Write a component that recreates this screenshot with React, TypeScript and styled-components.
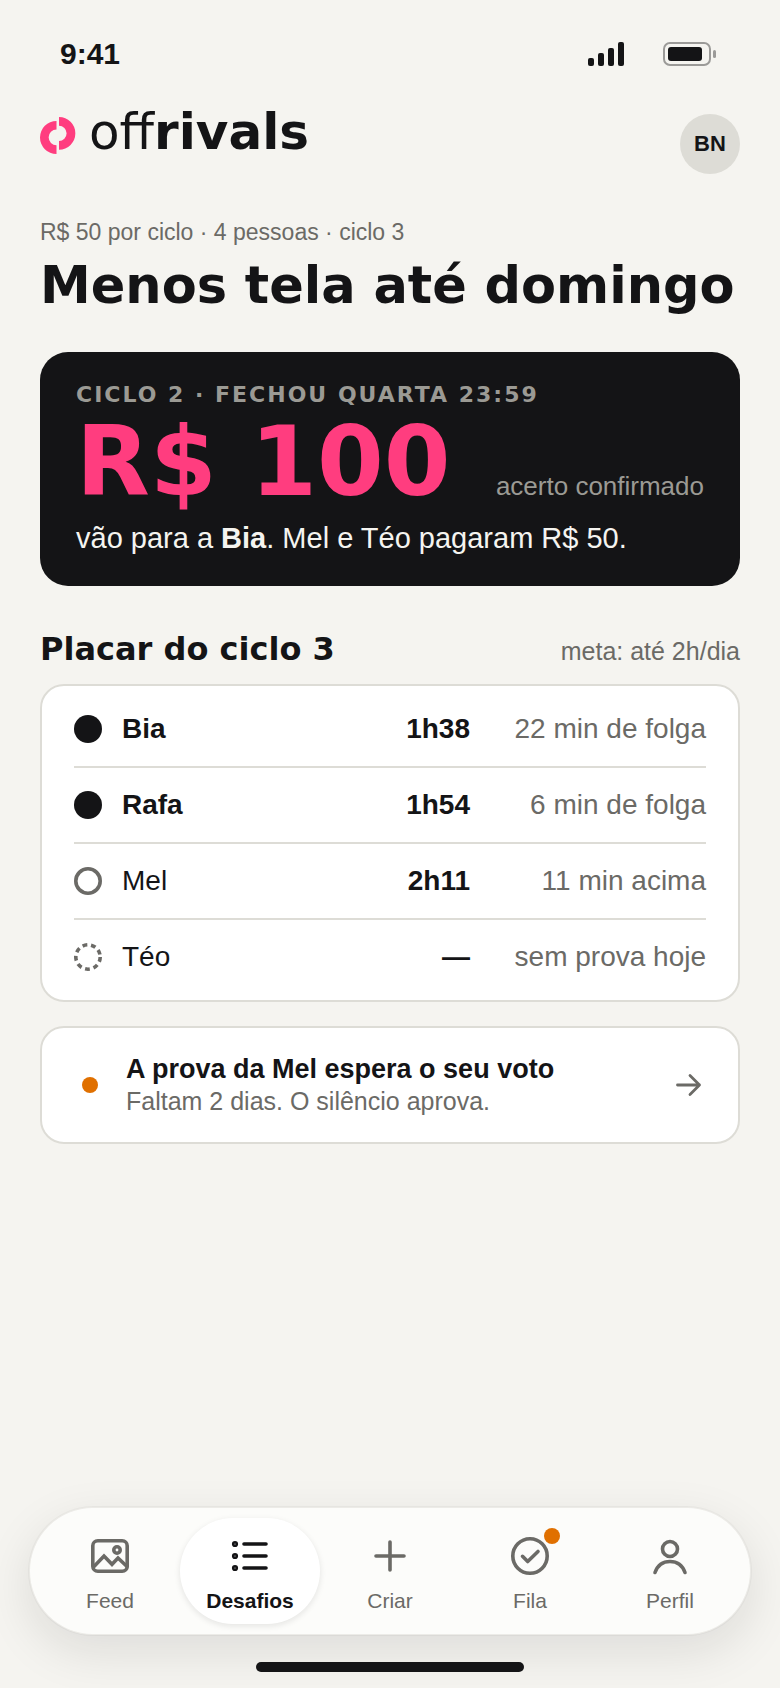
import { ReactNode, useState } from "react";
import styled, { createGlobalStyle } from "styled-components";

const ink = "#141416";
const muted = "#6b6a66";
const line = "#dddcd6";
const orange = "#e07000";
const wide = `"DejaVu Sans", Verdana, sans-serif`;

const GlobalStyle = createGlobalStyle`
    * {
        box-sizing: border-box;
    }
    body {
        margin: 0;
        background: #f5f4f0;
        color: ${ink};
        font-family: "Liberation Sans", Arial, sans-serif;
    }
    h1, h2, p {
        margin: 0;
    }
`;

const Page = styled.div`
    min-height: 100vh;
    display: flex;
    flex-direction: column;
`;

const StatusBar = styled.div`
    display: flex;
    justify-content: space-between;
    align-items: center;
    padding: 36px 64px 0 60px;
    font-size: 30px;
    line-height: 36px;
    font-weight: 700;
`;

const StatusIcons = styled.div`
    display: flex;
    align-items: center;
    gap: 39px;
    svg {
        display: block;
    }
`;

const Header = styled.header`
    display: flex;
    justify-content: space-between;
    align-items: flex-start;
    padding: 42px 40px 0;
`;

const Logo = styled.a`
    display: flex;
    align-items: flex-start;
    gap: 13px;
    color: ${ink};
    text-decoration: none;
    font-family: ${wide};
    font-size: 50px;
    line-height: 36px;
    svg {
        margin-top: 3px;
    }
`;

const LogoLight = styled.span`
    font-weight: 400;
`;

const LogoHeavy = styled.span`
    font-weight: 700;
`;

const Avatar = styled.button`
    width: 60px;
    height: 60px;
    padding: 0;
    border: none;
    border-radius: 50%;
    background: ${line};
    color: ${ink};
    font: 700 22px "Liberation Sans", Arial, sans-serif;
`;

const Main = styled.main`
    padding: 42px 40px 0;
`;

const Meta = styled.p`
    color: ${muted};
    font-size: 23px;
    line-height: 32px;
`;

const Title = styled.h1`
    font-family: ${wide};
    font-size: 51px;
    line-height: 60px;
    margin-top: 8px;
`;

const ResultCard = styled.section`
    margin-top: 36px;
    padding: 30px 36px;
    border-radius: 28px;
    background: ${ink};
    color: #f5f4f0;
`;

const Eyebrow = styled.p`
    color: #9b9a94;
    font-family: ${wide};
    font-size: 22px;
    line-height: 26px;
    font-weight: 700;
    letter-spacing: 2px;
    text-transform: uppercase;
`;

const AmountRow = styled.div`
    display: flex;
    justify-content: space-between;
    align-items: baseline;
    margin-top: 4px;
`;

const Amount = styled.strong`
    color: #ff3d7f;
    font-family: ${wide};
    font-size: 96px;
    line-height: 100px;
`;

const Confirmed = styled.span`
    color: #9b9a94;
    font-size: 26px;
`;

const Payout = styled.p`
    margin-top: 8px;
    font-size: 29px;
    line-height: 36px;
`;

const SectionHead = styled.div`
    display: flex;
    justify-content: space-between;
    align-items: baseline;
    margin-top: 41px;
`;

const SectionTitle = styled.h2`
    font-family: ${wide};
    font-size: 32px;
    line-height: 44px;
`;

const Goal = styled.span`
    color: ${muted};
    font-size: 25px;
`;

const Board = styled.div`
    margin-top: 13px;
    padding: 6px 32px;
    border: 2px solid ${line};
    border-radius: 24px;
    background: white;
`;

const Table = styled.table`
    width: 100%;
    border-spacing: 0;
    font-size: 28px;
    line-height: 36px;
    td, th {
        height: 76px;
        padding: 0;
        border-bottom: 2px solid ${line};
    }
    tr:last-child td, tr:last-child th {
        height: 74px;
        border-bottom: none;
    }
`;

const MarkCell = styled.td`
    width: 48px;
    svg {
        display: block;
    }
`;

const NameCell = styled.th<{ $strong: boolean }>`
    text-align: left;
    font-weight: ${({ $strong }) => ($strong ? 700 : 400)};
`;

const TimeCell = styled.td`
    text-align: right;
    font-weight: 700;
`;

const NoteCell = styled.td`
    width: 236px;
    text-align: right;
    color: ${muted};
`;

const VoteCard = styled.a`
    display: flex;
    align-items: center;
    margin-top: 24px;
    padding: 24px 36px 24px 40px;
    border: 2px solid ${line};
    border-radius: 24px;
    background: white;
    color: ${ink};
    text-decoration: none;
`;

const VoteDot = styled.span`
    width: 16px;
    height: 16px;
    margin-right: 28px;
    border-radius: 50%;
    background: ${orange};
`;

const VoteText = styled.div`
    flex: 1;
    padding-bottom: 2px;
`;

const VoteTitle = styled.p`
    font-size: 27px;
    line-height: 34px;
    font-weight: 700;
`;

const VoteNote = styled.p`
    color: ${muted};
    font-size: 25px;
    line-height: 30px;
`;

const Nav = styled.nav`
    display: flex;
    margin: auto 28px 26px;
    padding: 10px;
    border: 2px solid rgba(20, 20, 22, 0.04);
    border-radius: 65px;
    background: #fcfcfa;
    background-clip: padding-box;
    box-shadow: 0 16px 48px rgba(20, 20, 22, 0.1);
`;

const NavButton = styled.button<{ $active: boolean }>`
    position: relative;
    flex: 1;
    height: 106px;
    padding: 14px 0 0;
    border: none;
    border-radius: 53px;
    background: ${({ $active }) => ($active ? "white" : "transparent")};
    box-shadow: ${({ $active }) => ($active ? "0 2px 6px rgba(20, 20, 22, 0.1)" : "none")};
    color: ${({ $active }) => ($active ? ink : muted)};
    font: ${({ $active }) => ($active ? 700 : 400)} 21px/26px "Liberation Sans", Arial, sans-serif;
    display: flex;
    flex-direction: column;
    align-items: center;
    gap: 8px;
`;

const Badge = styled.span`
    position: absolute;
    top: 10px;
    left: calc(50% + 14px);
    width: 16px;
    height: 16px;
    border-radius: 50%;
    background: ${orange};
`;

const HomeBar = styled.div`
    width: 268px;
    height: 10px;
    margin: 0 auto 16px;
    border-radius: 5px;
    background: ${ink};
`;

type MarkKind = "full" | "ring" | "dashed";

const rows: { name: string; time: string; note: string; mark: MarkKind }[] = [
    { name: "Bia", time: "1h38", note: "22 min de folga", mark: "full" },
    { name: "Rafa", time: "1h54", note: "6 min de folga", mark: "full" },
    { name: "Mel", time: "2h11", note: "11 min acima", mark: "ring" },
    { name: "Téo", time: "—", note: "sem prova hoje", mark: "dashed" },
];

function Mark({ kind }: { kind: MarkKind }) {
    return (
        <svg width="28" height="28" viewBox="0 0 28 28" fill="none" stroke={muted} strokeWidth="3.6">
            {kind === "full" && <circle cx="14" cy="14" r="14" fill={ink} stroke="none" />}
            {kind === "ring" && <circle cx="14" cy="14" r="12.2" />}
            {kind === "dashed" && <circle cx="14" cy="14" r="12.2" strokeDasharray="4.8 3.8" />}
        </svg>
    );
}

function NavIcon({ children }: { children: ReactNode }) {
    return (
        <svg
            width="48"
            height="48"
            viewBox="0 0 48 48"
            fill="none"
            stroke="currentColor"
            strokeWidth="3.6"
            strokeLinecap="round"
            strokeLinejoin="round"
        >
            {children}
        </svg>
    );
}

const tabs = [
    {
        label: "Feed",
        icon: (
            <>
                <rect x="6.8" y="8.8" width="34.4" height="30.4" rx="5" />
                <circle cx="31" cy="18" r="3.2" />
                <path d="M8 34.5L18 24l8 8.3L32 26l9 8.5" strokeLinejoin="miter" />
            </>
        ),
    },
    {
        label: "Desafios",
        icon: (
            <>
                <path d="M18 12h22M18 24h22M18 36h22" />
                <g strokeWidth="2.6">
                    <circle cx="9" cy="12" r="1.8" />
                    <circle cx="9" cy="24" r="1.8" />
                    <circle cx="9" cy="36" r="1.8" />
                </g>
            </>
        ),
    },
    { label: "Criar", icon: <path d="M24 10v28M10 24h28" /> },
    {
        label: "Fila",
        badge: true,
        icon: (
            <>
                <circle cx="24" cy="24" r="17.2" />
                <path d="M16.5 24.3l5.2 5.2L32 19.5" />
            </>
        ),
    },
    {
        label: "Perfil",
        icon: (
            <>
                <circle cx="24" cy="17" r="7.5" />
                <path d="M9 40.5C11.5 33.5 17 29.5 24 29.5S36.5 33.5 39 40.5" />
            </>
        ),
    },
];

export default function App() {
    const [activeTab, setActiveTab] = useState("Desafios");

    return (
        <Page>
            <GlobalStyle />
            <StatusBar>
                <span>9:41</span>
                <StatusIcons>
                    <svg width="36" height="24" viewBox="0 0 36 24" fill={ink}>
                        <rect x="0" y="16" width="6" height="8" rx="2" />
                        <rect x="10" y="11" width="6" height="13" rx="2" />
                        <rect x="20" y="6" width="6" height="18" rx="2" />
                        <rect x="30" y="0" width="6" height="24" rx="2" />
                    </svg>
                    <svg width="53" height="24" viewBox="0 0 53 24">
                        <rect x="1" y="1" width="46" height="22" rx="6" fill="none" stroke="#9b9a98" strokeWidth="2" />
                        <rect x="5" y="5" width="34" height="14" rx="3" fill={ink} />
                        <rect x="50" y="8" width="3" height="8" rx="1.5" fill="#9b9a98" />
                    </svg>
                </StatusIcons>
            </StatusBar>
            <Header>
                <Logo href="#">
                    <svg width="36" height="38" viewBox="0 0 36 38" fill="#ff3d7f">
                        <path d="M16.5 4A16.5 16.5 0 0 0 16.5 37V28.2A7.85 7.85 0 0 1 16.5 12.5Z" />
                        <path d="M19 0A16.35 16.35 0 0 1 19 32.7V23.9A7.6 7.6 0 0 0 19 8.7Z" />
                    </svg>
                    <span>
                        <LogoLight>off</LogoLight>
                        <LogoHeavy>rivals</LogoHeavy>
                    </span>
                </Logo>
                <Avatar>BN</Avatar>
            </Header>
            <Main>
                <Meta>R$ 50 por ciclo · 4 pessoas · ciclo 3</Meta>
                <Title>Menos tela até domingo</Title>
                <ResultCard>
                    <Eyebrow>Ciclo 2 · fechou quarta 23:59</Eyebrow>
                    <AmountRow>
                        <Amount>R$ 100</Amount>
                        <Confirmed>acerto confirmado</Confirmed>
                    </AmountRow>
                    <Payout>
                        vão para a <strong>Bia</strong>. Mel e Téo pagaram R$ 50.
                    </Payout>
                </ResultCard>
                <SectionHead>
                    <SectionTitle>Placar do ciclo 3</SectionTitle>
                    <Goal>meta: até 2h/dia</Goal>
                </SectionHead>
                <Board>
                    <Table>
                        <tbody>
                            {rows.map((row) => (
                                <tr key={row.name}>
                                    <MarkCell>
                                        <Mark kind={row.mark} />
                                    </MarkCell>
                                    <NameCell scope="row" $strong={row.mark === "full"}>
                                        {row.name}
                                    </NameCell>
                                    <TimeCell>{row.time}</TimeCell>
                                    <NoteCell>{row.note}</NoteCell>
                                </tr>
                            ))}
                        </tbody>
                    </Table>
                </Board>
                <VoteCard href="#">
                    <VoteDot />
                    <VoteText>
                        <VoteTitle>A prova da Mel espera o seu voto</VoteTitle>
                        <VoteNote>Faltam 2 dias. O silêncio aprova.</VoteNote>
                    </VoteText>
                    <svg
                        width="28"
                        height="28"
                        viewBox="0 0 28 28"
                        fill="none"
                        stroke={muted}
                        strokeWidth="2.8"
                        strokeLinecap="round"
                        strokeLinejoin="round"
                    >
                        <path d="M3.5 14h22M16 4.6l9.5 9.4L16 23.4" />
                    </svg>
                </VoteCard>
            </Main>
            <Nav>
                {tabs.map((tab) => (
                    <NavButton key={tab.label} $active={tab.label === activeTab} onClick={() => setActiveTab(tab.label)}>
                        <NavIcon>{tab.icon}</NavIcon>
                        {tab.label}
                        {tab.badge && <Badge />}
                    </NavButton>
                ))}
            </Nav>
            <HomeBar />
        </Page>
    );
}
